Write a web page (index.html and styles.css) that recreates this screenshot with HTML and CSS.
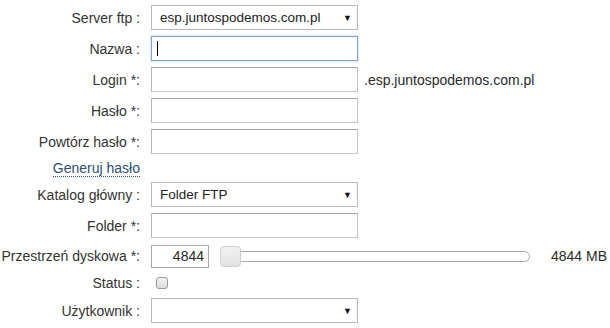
FILE: index.html
```
<!DOCTYPE html>
<html lang="pl">
<head>
    <meta charset="UTF-8">
    <title>Konto FTP</title>
    <link rel="stylesheet" href="styles.css">
</head>
<body>
<form class="ftp-form">
    <label class="lbl">Server ftp :</label>
    <div class="select"><span>esp.juntospodemos.com.pl</span><span class="arrow">&#9660;</span></div>

    <label class="lbl">Nazwa :</label>
    <div class="field focus"><span class="caret"></span></div>

    <label class="lbl">Login *:</label>
    <div class="inline"><div class="field"></div><span class="suffix">.esp.juntospodemos.com.pl</span></div>

    <label class="lbl">Hasło *:</label>
    <div class="field"></div>

    <label class="lbl">Powtórz hasło *:</label>
    <div class="field"></div>

    <div class="lbl gen"><a href="#">Generuj hasło</a></div>
    <div></div>

    <label class="lbl">Katalog główny :</label>
    <div class="select"><span>Folder FTP</span><span class="arrow">&#9660;</span></div>

    <label class="lbl">Folder *:</label>
    <div class="field"></div>

    <label class="lbl">Przestrzeń dyskowa *:</label>
    <div class="quota">
        <div class="field num">4844</div>
        <div class="slider"><div class="track"></div><div class="handle"></div></div>
        <span class="mb">4844 MB</span>
    </div>

    <label class="lbl status">Status :</label>
    <div class="status-box"><span class="check"></span></div>

    <label class="lbl">Użytkownik :</label>
    <div class="select"><span></span><span class="arrow">&#9660;</span></div>
</form>
</body>
</html>
```
FILE: styles.css
```
body {
    margin: 0;
    padding: 5px 0 0 0;
    font-family: "Liberation Sans", Arial, sans-serif;
    font-size: 14px;
    color: #2a2a2a;
    background: #fff;
}
.ftp-form {
    display: grid;
    grid-template-columns: 140px 1fr;
    column-gap: 11px;
    row-gap: 6px;
    align-items: center;
    justify-items: start;
}
.lbl {
    justify-self: end;
    text-align: right;
    white-space: nowrap;
    color: #333;
}
.field {
    box-sizing: border-box;
    flex-shrink: 0;
    height: 25px;
    width: 207px;
    border: 1px solid #c6c6c6;
    border-top-color: #a3a3a3;
    border-left-color: #b5b5b5;
    background: #fff;
    display: flex;
    align-items: center;
}
.field.focus {
    border-color: #7ea2d6;
    box-shadow: 0 0 2px #a9c3ea;
}
.caret {
    display: block;
    width: 1px;
    height: 15px;
    margin-left: 5px;
    background: #000;
}
.select {
    box-sizing: border-box;
    height: 25px;
    width: 207px;
    border: 1px solid #b8b8b8;
    background: #fff;
    display: flex;
    align-items: center;
    justify-content: space-between;
    padding: 0 5px 0 8px;
    font-size: 13.5px;
    color: #222;
}
.arrow {
    font-size: 9px;
    color: #111;
}
.inline {
    display: flex;
    align-items: center;
    gap: 6px;
}
.suffix {
    white-space: nowrap;
}
.gen {
    line-height: 16px;
}
.gen a {
    color: #2e4f73;
    text-decoration: none;
    border-bottom: 1px dotted #2e4f73;
}
.quota {
    display: flex;
    align-items: center;
    height: 24px;
}
.field.num {
    width: 58px;
    height: 23px;
    justify-content: flex-end;
    padding-right: 4px;
    border-color: #a9a9a9;
}
.slider {
    position: relative;
    flex-shrink: 0;
    width: 310px;
    height: 22px;
    margin-left: 11px;
    display: flex;
    align-items: center;
}
.track {
    box-sizing: border-box;
    width: 100%;
    height: 11px;
    border: 1px solid #a8a8a8;
    border-radius: 6px;
    background: #fff;
}
.handle {
    position: absolute;
    left: 0;
    top: 1px;
    box-sizing: border-box;
    width: 21px;
    height: 21px;
    border: 1px solid #cfcfcf;
    border-radius: 4px;
    background: linear-gradient(#f2f2f2, #e2e2e2);
}
.mb {
    margin-left: 21px;
    white-space: nowrap;
}
.status, .status-box {
    height: 18px;
    line-height: 18px;
}
.status-box {
    display: flex;
    align-items: center;
}
.check {
    display: block;
    box-sizing: border-box;
    width: 12px;
    height: 12px;
    margin-left: 5px;
    border: 1px solid #9a9a9a;
    border-radius: 3px;
    background: linear-gradient(#f4f4f4, #dcdcdc);
}
```
